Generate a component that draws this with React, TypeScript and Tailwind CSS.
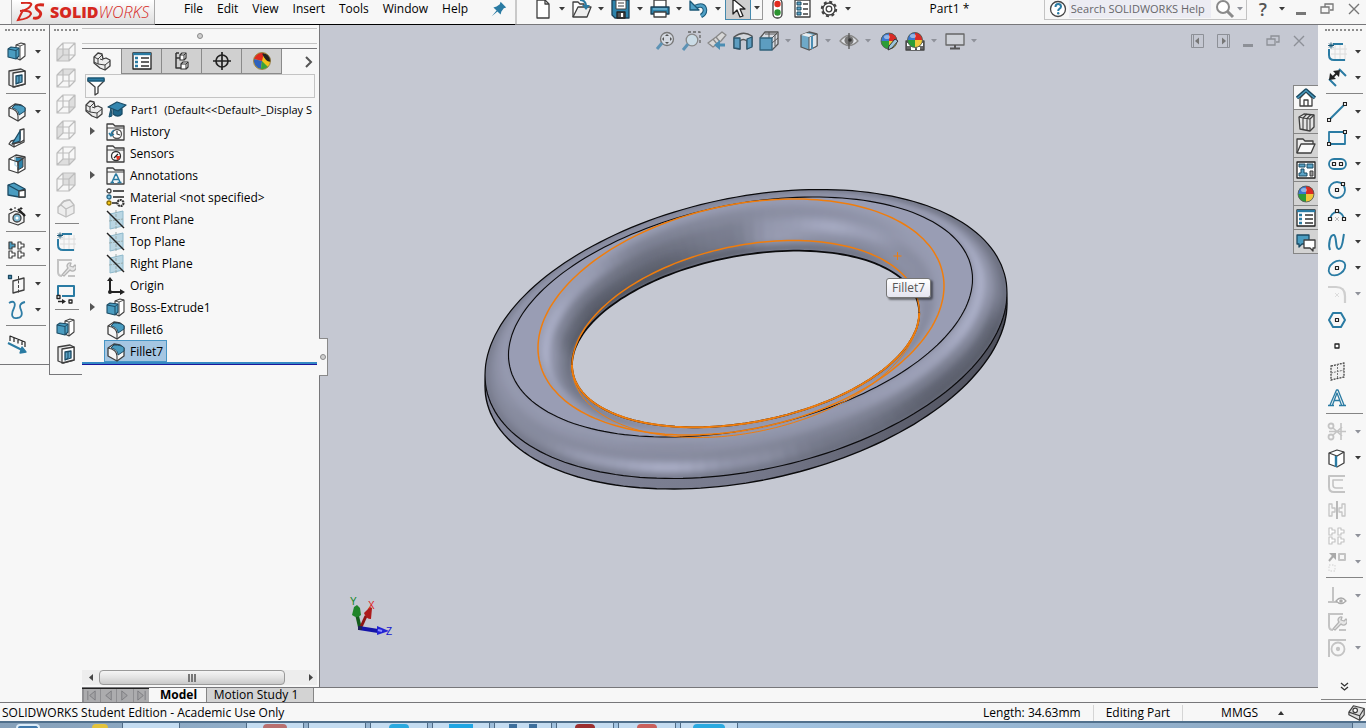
import React from 'react';

type Kids = { children?: React.ReactNode };
const INK = '#3f3f3f';
const BLUE = '#2a7ba3';
const SKY = '#5ba3c6';
const FAINT = '#c4c4c4';

const Ico = ({ children, size = 20 }: Kids & { size?: number }) => (
  <svg width={size} height={size} viewBox="0 0 20 20" fill="none" stroke={INK} strokeWidth="1.3" strokeLinejoin="round" className="shrink-0" aria-hidden="true">
    {children}
  </svg>
);

/* ---------- feature icons ---------- */
const Extrude = () => (
  <Ico>
    <path d="M9 3l5-2 4 1v12l-5 4-4-2z" fill="#fff" strokeWidth="1.100" />
    <path d="M13 4l5-2M13 4v14M13 4l-4-1" strokeWidth=".9" />
    <path d="M1 7l3-2 8 1v8l-3 3-8-2z" fill="#4a9cc0" stroke="#1c4a63" strokeWidth="1.100" />
    <path d="M1 7l8 1.500L12 6M9 8.500V17" stroke="#1c4a63" strokeWidth="1" />
  </Ico>
);
const CutExtrude = () => (
  <Ico>
    <path d="M2 3l12-2 4 2v13l-11 3-5-2z" fill="#e9e9e9" />
    <path d="M6 5l12-2v13L6 19z" fill="#fff" />
    <path d="M9 8l6-1v7l-6 2z" fill={SKY} stroke="#1c4a63" />
    <path d="M12 8v6l-3 2" stroke="#1c4a63" strokeWidth="1" />
  </Ico>
);
const FilletI = () => (
  <Ico>
    <path d="M2 6l6-4 6 1 4 3v8l-7 5-9-5z" fill="#f6f6f6" />
    <path d="M8 3c5 0 9 1 10 3v3l-6 4c0-3-2-6-7-7z" fill="#4a9cc0" stroke="#1c4a63" strokeWidth="1" />
    <path d="M2 6c5 1 9 3 9 8v5" strokeWidth="1.100" />
  </Ico>
);
const Rib = () => (
  <Ico>
    <path d="M13 2l4-1v13l-10 5-5-3 2-3 9-2z" fill="#fff" />
    <path d="M13 3v10l-8 3z" fill="#4a9cc0" stroke="#1c4a63" />
    <path d="M5 16l9-2 3-2M7 19v-3" />
  </Ico>
);
const Shell = () => (
  <Ico>
    <path d="M2 5l7-4 9 2v12l-7 4-9-3z" fill="#fff" />
    <path d="M8 3l8 1v9l-5 3V8L8 7z" fill="#2d83ab" strokeWidth="1" />
    <path d="M8 3v8l3 2" stroke="#bcdcea" strokeWidth="1.500" />
    <path d="M2 5l6 2 3 1v11M11 8l7-5" />
  </Ico>
);
const Draft = () => (
  <Ico>
    <path d="M1 5l6-2 11 6v8h-6L1 15z" fill="#4a9cc0" stroke="#1c4a63" />
    <path d="M1 5l11 6v6M12 11l6-2" stroke="#1c4a63" />
    <path d="M12 11l6-1v7h-6z" fill="#fff" />
  </Ico>
);
const Wizard = () => (
  <Ico>
    <path d="M2 8l6-3 9 3v8l-6 3-9-3z" fill="#f2f2f2" />
    <circle cx="10" cy="12" r="4" fill="#7fb9d3" />
    <circle cx="10" cy="12" r="1.500" fill="#fff" stroke="none" />
    <path d="M11 3l7 7" stroke="#222" strokeWidth="2.400" />
    <path d="M4 2v3M2.500 3.500h3M8 1v2M14 1v3M12.500 2.500h3" stroke="#222" strokeWidth="1" />
  </Ico>
);
const PatternI = ({ c = INK, a = '#4a9cc0' }: { c?: string; a?: string }) => (
  <Ico>
    {[[2, 3], [11, 3], [2, 12], [11, 12]].map(([x, y], i) => (
      <path key={i} d={`M${x} ${y - 1}h3v2h3v3h-3v2h-3z`} fill={i === 0 ? a : '#fff'} stroke={c} strokeWidth="1.200" />
    ))}
  </Ico>
);
const PlaneGeo = () => (
  <Ico>
    <path d="M6 7l11-3v12L6 19z" />
    <path d="M11.500 2v17" strokeDasharray="3 1.500" strokeWidth="1" />
    <rect x="1.500" y="1.500" width="3" height="3" fill={SKY} stroke="#1c4a63" />
  </Ico>
);
const CurveI = () => (
  <Ico><path d="M2 3c5-3 7 0 5 5-4 8-1 11 3 10 4 0 6-3 4-8-2-4-1-7 4-8" stroke="#2f7da6" strokeWidth="1.800" /></Ico>
);
const Instant = () => (
  <Ico>
    <path d="M3 7V2l15 6v5M7 8V4M11 9.500V6M15 11V7.500" stroke="#222" strokeWidth="1.200" />
    <path d="M1 9l14 7" stroke={BLUE} strokeWidth="2" />
    <path d="M13 19l6-1-4-5z" fill={BLUE} stroke={BLUE} />
  </Ico>
);
const faces = [
  'M1 7h12v12H1z',
  'M1 7l6-6h12l-6 6z',
  'M13 7l6-6v12l-6 6z',
  'M1 7l6-6v12l-6 6z',
  'M1 19l6-6h12l-6 6z',
  'M7 1h12v12H7z',
];
const GhostCube = ({ n }: { n: number }) => (
  <Ico>
    <path d={faces[n]} fill="#dedede" stroke="none" />
    <path d="M7 1h12v12H7zM1 7h12v12H1zM1 7l6-6M13 7l6-6M1 19l6-6M13 19l6-6" stroke="#bdbdbd" strokeWidth="1.200" />
  </Ico>
);
const GhostFillet = () => (
  <Ico>
    <path d="M2 9l6-6 6-1 4 5v8l-8 4-8-4z" fill="#ededed" stroke="#bdbdbd" />
    <path d="M2 9l3-2 5 4v8M5 7c1-3 3-5 9-5M10 11l8-4" stroke="#bdbdbd" />
  </Ico>
);
const SketchI = () => (
  <Ico>
    <path d="M8 3v16M13 3v16M18 3v16M4 7h16M4 12h16" stroke="#dcdcdc" strokeWidth="1" />
    <path d="M6 2h10M2 7v6q0 5 5 5h11" stroke={BLUE} strokeWidth="2" />
    <path d="M1 3.500h6M4 .5v6M2 1.500l4 4M6 1.500l-4 4" stroke="#1b5877" strokeWidth="1" />
  </Ico>
);
const RepairI = () => (
  <Ico>
    <path d="M2 1v13q0 4 4 4M2 2h14M12 18h7" stroke={FAINT} strokeWidth="2" />
    <path d="M6 17l6-7a3 3 0 013-5l-1 3 3 1 2-2a3 3 0 01-5 5l-6 6z" fill="#e6e6e6" stroke="#b4b4b4" />
  </Ico>
);
const RectMove = () => (
  <Ico>
    <path d="M2 12V2h16v10H6" stroke={BLUE} strokeWidth="2" />
    <rect x="1" y="11.500" width="3" height="3" fill="#fff" stroke="#222" />
    <path d="M2 17.500h5" stroke="#222" strokeWidth="1.500" /><path d="M6 15l4 2.500L6 20z" fill="#222" stroke="none" />
    <rect x="13" y="16" width="3" height="3" fill="#fff" stroke="#222" />
  </Ico>
);

/* ---------- sketch icons ---------- */
const Sq = ({ x, y, c = '#222' }: { x: number; y: number; c?: string }) => (
  <rect x={x - 1.5} y={y - 1.5} width="3" height="3" fill="#fff" stroke={c} strokeWidth="1.200" />
);
const Dim = () => (
  <Ico>
    <path d="M2 11l7 7M12 1l7 7" stroke={BLUE} strokeWidth="2" />
    <path d="M5 10l6-6" stroke="#222" strokeWidth="1.800" />
    <path d="M2 12l1-7 6 6zM13 2l-1 7-6-6z" fill="#222" stroke="none" />
  </Ico>
);
const LineI = () => <Ico><path d="M2 18L18 2" stroke={BLUE} strokeWidth="2" /><Sq x={2} y={18} /><Sq x={18} y={2} /></Ico>;
const RectI = () => <Ico><path d="M2 4h16v12H2z" stroke={BLUE} strokeWidth="1.800" /><Sq x={2} y={16} /><Sq x={18} y={4} /></Ico>;
const SlotI = () => <Ico><rect x="2" y="5" width="17" height="10" rx="5" stroke={BLUE} strokeWidth="1.800" /><Sq x={7} y={10} /><Sq x={14} y={10} /></Ico>;
const CircI = () => <Ico><circle cx="10" cy="10" r="8" stroke={BLUE} strokeWidth="1.800" /><Sq x={10} y={10} /><Sq x={16} y={4} /></Ico>;
const ArcI = () => <Ico><path d="M3 14a7 8 0 0114 0" stroke={BLUE} strokeWidth="1.800" /><Sq x={3} y={13} /><Sq x={17} y={13} /><Sq x={10} y={5} /><path d="M8 11l4 4M12 11l-4 4" stroke="#bbb" strokeWidth="1" /></Ico>;
const SplineI = () => <Ico><path d="M3 18c-2-5 0-16 4-15 3 1 1 15 5 14 4 0 4-12 5-15" stroke={BLUE} strokeWidth="2" /></Ico>;
const EllI = () => <Ico><ellipse cx="10" cy="10" rx="9" ry="6.500" transform="rotate(-35 10 10)" stroke={BLUE} strokeWidth="1.800" /><Sq x={10} y={10} /></Ico>;
const SkFillet = () => <Ico><path d="M1 3h8q9 0 9 9v7" stroke="#cfcfcf" strokeWidth="2.200" /><path d="M8 9l4 4M12 9l-4 4" stroke="#ddd" strokeWidth="1" /></Ico>;
const HexI = () => <Ico><path d="M6 3h8l4 7-4 7H6l-4-7z" stroke={BLUE} strokeWidth="2" /><Sq x={10} y={10} /></Ico>;
const PointI = () => <Ico><rect x="8" y="8" width="4" height="4" fill="#fff" stroke="#222" /></Ico>;
const SkPlane = () => <Ico><path d="M4 4l13-3v14L4 18z" fill="#f0f0f0" stroke="#444" strokeDasharray="2 1" /><path d="M4 11l13-3M10.500 2v15" stroke="#777" strokeDasharray="2 1" strokeWidth="1" /></Ico>;
const TextI = () => <Ico><path d="M1 17.500h6M12 17.500h7M3 17L9.500 2h1.500l6 15M5.500 17l4.500-12 4.500 12M6.500 12.500h7" stroke={BLUE} strokeWidth="1.300" /></Ico>;
const TrimI = () => (
  <Ico>
    <circle cx="4" cy="4" r="2.500" stroke={FAINT} strokeWidth="1.800" /><circle cx="4" cy="15" r="2.500" stroke={FAINT} strokeWidth="1.800" />
    <path d="M6 6l9 8M6 13l9-8M2 9.500h17M14 1v17" stroke={FAINT} strokeWidth="1.600" />
  </Ico>
);
const ConvertI = () => <Ico><path d="M2 5l8-3 7 2v11l-7 4-8-3z" fill="#fff" /><path d="M2 5l8 3 7-4" /><path d="M9 8v11" stroke={BLUE} strokeWidth="2.400" /></Ico>;
const OffsetI = () => <Ico><path d="M18 2H2v11q0 5 5 5h11" stroke={FAINT} strokeWidth="2" /><path d="M16 6H6v5q0 3 3 3h7" stroke={FAINT} strokeWidth="1.600" /></Ico>;
const MirrorI = () => <Ico><path d="M2 4h3v4h3v4H5v4H2zM18 4h-3v4h-3v4h3v4h3z" stroke={FAINT} /><path d="M10 1v18" stroke="#999" /></Ico>;
const MoveI = () => <Ico><path d="M2 9l5-6" stroke="#aaa" strokeWidth="2" /><path d="M2 1h7v7z" fill="#aaa" stroke="none" /><rect x="12" y="2" width="6" height="6" stroke={FAINT} strokeWidth="2" /><path d="M2 13h6v6H2z" stroke="#ddd" strokeDasharray="1.500 1.500" /></Ico>;
const RelationI = () => <Ico><path d="M6 1v15M1 16h9" stroke={FAINT} strokeWidth="2" /><path d="M9 15q5-6 10 0-5 5-10 0z" fill="#fff" stroke="#aaa" /><circle cx="14" cy="15" r="1.800" fill="#aaa" stroke="none" /></Ico>;
const SnapI = () => <Ico><path d="M2 19V2h17" stroke={FAINT} strokeWidth="2" /><circle cx="11" cy="11" r="6.500" stroke={FAINT} strokeWidth="1.800" /><circle cx="11" cy="11" r="1.500" fill={FAINT} stroke={FAINT} /></Ico>;

/* ---------- tree icons ---------- */
const PartI = () => (
  <Ico>
    <path d="M2 5l4-4 4 1 1 5 3-1 4 2v6l-5 4-5-2-6-5z" fill="#ededed" />
    <path d="M2 5l4 2 4-4M6 7v5l7 1 5-4M13 13v5M6 12l-4-2M8 7l3 1" strokeWidth="1" />
  </Ico>
);
const Cap = () => (
  <Ico>
    <path d="M6 9v5q5 4 9 0V9z" fill="#1f668a" stroke="#1a4d68" />
    <path d="M1 7l9-5 9 3-8 6z" fill="#3487b0" stroke="#1a4d68" />
    <path d="M4 8l-2 9 3-1z" fill="#1f668a" stroke="#1a4d68" strokeWidth="1" />
  </Ico>
);
const Folder = ({ children }: Kids) => (
  <Ico>
    <path d="M1 18V2h6l2 2h9v14z" fill="#f6f6f6" />
    <path d="M1 6h17" strokeWidth="1" />
    {children}
  </Ico>
);
const History = () => <Folder><circle cx="11" cy="12" r="4.500" fill="#fff" stroke="#555" /><path d="M11 9v3l3 1" strokeWidth="1.200" /><path d="M8 8q-3 2-3 5M3 11l2 3 3-2" stroke={BLUE} strokeWidth="1.400" /></Folder>;
const Sensors = () => <Folder><circle cx="10" cy="12" r="4.500" fill="#fff" stroke="#333" /><path d="M10 12h4a4 4 0 01-3 4z" fill="#e5301f" stroke="none" /><path d="M8 14l4-4" stroke="#222" /></Folder>;
const Annot = () => <Folder><path d="M4.500 16.500h3.500M11.500 16.500h4M6 16l3.700-8h.6L14 16M7.500 13.500h5" stroke={BLUE} strokeWidth="1.500" /></Folder>;
const Material = () => (
  <Ico>
    <circle cx="3" cy="3" r="2" fill="#fff" /><circle cx="3" cy="9" r="2" fill="#7cc0df" stroke="#27688a" /><circle cx="3" cy="15" r="2" fill="#f3c515" stroke="#8a6b00" />
    <path d="M7 3h11M7 9h11M6 15h5" stroke="#222" strokeWidth="1.600" />
    <circle cx="14.500" cy="15" r="3" stroke="#333" strokeWidth="2.200" fill="#fff" strokeDasharray="2 .6" />
  </Ico>
);
const PlaneI = () => (
  <Ico>
    <path d="M4 4l13-3v15L4 19z" fill="#b9d6e3" stroke="#8eb9cc" strokeWidth="1" />
    <path d="M10 0v19M3 11l14-2" stroke="#9aa" strokeWidth="1" strokeDasharray="3 1" />
    <path d="M1 1l17 17" stroke="#222" strokeWidth="1.400" />
  </Ico>
);
const Origin = () => <Ico><path d="M4 4v12h11" stroke="#222" strokeWidth="2" /><path d="M1 5l3-4 3 4zM14 13l5 3-5 3z" fill="#222" stroke="none" /><circle cx="4" cy="16" r="2" fill="#222" stroke="none" /></Ico>;
const Ball = ({ k = 8 }: { k?: number }) => (
  <>
    <circle cx="10" cy="10" r={k} fill="#2c9c37" stroke="none" />
    <path d={`M10 10V${10 - k}A${k} ${k} 0 01${10 + k} 10z`} fill="#da2b26" stroke="none" />
    <path d={`M10 10H${10 + k}A${k} ${k} 0 0110 ${10 + k}z`} fill="#f0c73a" stroke="none" />
    <path d={`M${10 - k} 10A${k} ${k} 0 0110 ${10 - k}V10z`} fill="#3b78d0" stroke="none" />
    <circle cx="10" cy="10" r={k} stroke="#555" strokeWidth=".8" />
    <ellipse cx="8" cy="6" rx="3" ry="2" fill="#fff" opacity=".45" stroke="none" />
  </>
);
const BallI = () => <Ico><Ball /></Ico>;
const AppearTab = () => (
  <Ico>
    <circle cx="10" cy="10" r="8.500" fill="#f2c21a" stroke="none" />
    <path d="M10 10L2 8A8.500 8.500 0 0112 2z" fill="#df2b20" stroke="none" />
    <path d="M10 10l-8-2a8.500 8.500 0 007 10z" fill="#2f62bd" stroke="none" />
    <path d="M10 10l-1 8a8.500 8.500 0 007-2z" fill="#3aa33c" stroke="none" />
    <path d="M11 3q6 0 7 7-4 0-7-7z" fill="#222" stroke="#222" />
    <circle cx="10" cy="10" r="8.500" stroke="#8a7340" strokeWidth=".8" />
  </Ico>
);
const PropI = () => (
  <Ico>
    <path d="M1 2h18v16H1z" fill="#fff" stroke="#222" /><path d="M1 3h18" stroke={BLUE} strokeWidth="2.400" />
    <path d="M3 7h3M3 11h3M3 15h3" stroke={BLUE} strokeWidth="2.400" /><path d="M9 7h8M9 11h8M9 15h8" stroke="#333" />
  </Ico>
);
const ConfigI = () => <Ico><path d="M4 2h3M4 2v15h5M4 7h4" stroke="#333" strokeWidth="1.500" /><path d="M8 4l2-2h4v5l-2 2H8zM9 13l2-2h5v5l-2 2H9z" fill="#fff" stroke="#333" strokeWidth="1.200" /><path d="M8 4h4v5M12 4l2-2M9 13h5v5M14 13l2-2" stroke="#333" strokeWidth="1" /></Ico>;
const Cross = () => <Ico><circle cx="10" cy="10" r="6" stroke="#222" strokeWidth="1.700" /><path d="M10 1v18M1 10h18" stroke="#222" strokeWidth="1.700" /></Ico>;
const FilterI = () => <Ico><path d="M2 3h16v2l-6 6v6l-3 2v-8L2 5z" fill="#fff" /><path d="M2 2h16v3H2z" fill={BLUE} stroke="#1b5877" /></Ico>;

/* ---------- top bar icons ---------- */
const NewI = () => <Ico><path d="M4 1h8l4 4v14H4z" fill="#fff" /><path d="M12 1v4h4" /></Ico>;
const OpenI = () => <Ico><path d="M1 18V3h5l2 2h4v3" fill="#fff" /><path d="M1 18L6 8h13l-4 10z" fill="#eee" /><path d="M8 1q5 0 6 5" stroke={BLUE} strokeWidth="2.200" /><path d="M10 6h8l-4 5z" fill={BLUE} stroke="none" /></Ico>;
const SaveI = () => <Ico><path d="M1 1h17v18H4l-3-3z" fill="#2d83ab" stroke="#1b3f55" /><path d="M5 1h10v9H5z" fill="#fff" stroke="#444" strokeWidth="1" /><path d="M7 4h6M7 7h6" strokeWidth="1" /><path d="M6 13h8v6H6z" fill="#555" stroke="#222" /><path d="M11 14v4" stroke="#fff" strokeWidth="2" /></Ico>;
const PrintI = () => <Ico><path d="M4 8V1h12v7" fill="#fff" /><path d="M1 8h18v7H1z" fill="#2d83ab" stroke="#1b3f55" /><path d="M4 13h12v5H4z" fill="#fff" /><path d="M3 10h14" stroke="#9fd0e6" strokeWidth="1" /></Ico>;
const UndoI = () => <Ico><path d="M6 8q9-4 10 3 0 4-4 6" stroke="#1b5877" strokeWidth="4.500" /><path d="M6 8q9-4 10 3 0 4-4 6" stroke="#4fa0c6" strokeWidth="2.500" /><path d="M1 2v9h9z" fill="#4fa0c6" stroke="#1b5877" /></Ico>;
const PickI = () => <Ico><path d="M5 1v15l4-4 3 7 3-1-3-7h5z" fill="#fff" stroke="#222" /></Ico>;
const LightI = () => <Ico><rect x="6" y="0" width="9" height="19" rx="4" fill="#fff" /><circle cx="10.500" cy="5" r="3.200" fill="#e22b1e" stroke="none" /><circle cx="10.500" cy="13.500" r="3.200" fill="#2c9430" stroke="none" /></Ico>;
const OptI = () => <Ico><path d="M2 1h15v17H2z" fill="#fff" /><path d="M4 3h4v3H4zM4 8h4v3H4zM4 13h4v3H4z" fill={SKY} stroke="#1b4a63" strokeWidth="1" /><path d="M10 5h5M10 10h5M10 15h5" /></Ico>;
const GearI = () => <Ico><circle cx="10" cy="10" r="7.200" strokeWidth="2" strokeDasharray="3 2.655" /><circle cx="10" cy="10" r="6" fill="#fff" /><circle cx="10" cy="10" r="2.800" /></Ico>;
const PinI = () => <Ico size={16}><path d="M12 1l7 7-3 1-3 4-1 4-4-4-7 6 6-7-4-4 4-1 4-3z" fill={BLUE} stroke="none" /></Ico>;
const GlassI = () => <Ico><circle cx="8" cy="8" r="6" fill="#fff" stroke="#8a8a8a" strokeWidth="2" /><path d="M12 12l6 6" stroke="#8a8a8a" strokeWidth="3" /></Ico>;
const HelpI = () => <svg width="18" height="18" viewBox="0 0 18 18" className="shrink-0" aria-hidden="true"><circle cx="9" cy="9" r="7.500" fill="#fff" stroke="#444" strokeWidth="1.300" /><path d="M6.500 7q0-3 2.700-3T12 6.500q0 1.500-1.600 2.300Q9.200 9.500 9.200 11" fill="none" stroke={BLUE} strokeWidth="2" /><circle cx="9.200" cy="13.300" r="1.200" fill={BLUE} /></svg>;

/* ---------- view icons ---------- */
const ZoomFit = () => <Ico><circle cx="12" cy="8" r="6.500" fill="#d3d8e0" stroke="#777" /><path d="M7 12l-5 6" stroke="#5d93b5" strokeWidth="3" /><path d="M12 3l2 2h-4zM12 13l2-2h-4zM7 8l2-2v4zM17 8l-2-2v4z" fill="#555" stroke="none" /></Ico>;
const ZoomArea = () => <Ico><path d="M7 1h12v13" stroke="#666" strokeDasharray="3 2" /><circle cx="11" cy="9" r="5.800" fill="#cbdce6" stroke="#888" /><path d="M7 13l-5 6" stroke="#5d93b5" strokeWidth="3" /></Ico>;
const PrevView = () => <Ico><path d="M1 12l8-6 6-5 4 3-5 6-8 6z" fill="#d8d8d8" stroke="#888" /><path d="M9 6l4 5M6 8l4 5" stroke="#888" /><path d="M18 14h-6" stroke="#4a8db3" strokeWidth="3" /><path d="M13 9v10l-6-5z" fill="#4a8db3" stroke="none" /></Ico>;
const SectionI = () => <Ico><path d="M1 6q9-7 18-1v10l-5 3V10q-4-3-7 0v8l-6-1z" fill="#d4d7dc" stroke="#555" /><path d="M1 7h6v11l-6-1zM14 8l5-2v10l-5 2z" fill="#5d9dc0" stroke="#2b566e" /></Ico>;
const OrientI = () => <Ico><path d="M1 7l5-6h13v12l-6 6" fill="#d9dce2" stroke="#555" /><path d="M13 7l6-6M10 1v6M16 4v11M6 3h12M13 12l6-5" stroke="#555" strokeWidth="1" /><path d="M1 7h12v12H1z" fill="#5d9dc0" stroke="#31617b" /></Ico>;
const DisplayI = () => <Ico><path d="M2 4l8-3 8 2v12l-8 4-8-3z" fill="#6fa9c8" stroke="#555" /><path d="M10 6l8-3v12l-8 4z" fill="#dfe5ea" stroke="#555" strokeWidth="1" /><path d="M2 4l8 2 4-2-7-2z" fill="#e9edf0" stroke="none" /><path d="M13 5v13" stroke="#4a8db3" strokeWidth="2" /></Ico>;
const EyeI = () => <Ico><path d="M1 10q9-11 18 0-9 9-18 0z" fill="#dfe1e6" stroke="#888" /><circle cx="10" cy="9.500" r="4.500" fill="#777" stroke="none" /><path d="M10 2v16" stroke="#555" /><circle cx="11" cy="9" r="1.800" fill="#333" stroke="none" /></Ico>;
const EditApp = () => <Ico><Ball k={8} /><path d="M9 19l1-4 6-7 3 2-6 7z" fill="#9cc4dc" stroke="#333" strokeWidth="1" /></Ico>;
const SceneI = () => <Ico><path d="M1 10h18v9H1z" fill="#666" stroke="#444" /><path d="M2 12h4v3H2zM14 12h4v3h-4zM6 16h4v3H6zM12 16h3v3h-3z" fill="#fff" stroke="none" /><g transform="translate(0 -1)"><Ball k={7.500} /></g></Ico>;
const MonitorI = () => <Ico><path d="M1 3h18v11H1z" fill="#cfd2d8" stroke="#666" /><path d="M10 14v3M5 17.500h10" stroke="#555" strokeWidth="2" /></Ico>;

/* ---------- task pane icons ---------- */
const HomeI = () => <Ico><path d="M4 10v8h12v-8l-6-6z" fill="#fff" /><path d="M8 18v-6h4v6" /><path d="M1 10l9-8 9 8" stroke="#1b4a63" strokeWidth="3.400" /><path d="M1.500 10L10 2.500l8.500 7.500" stroke="#4a9cc0" strokeWidth="1.200" /></Ico>;
const BooksI = () => <Ico><path d="M3 5l5-3 10 1v12l-4 4L4 17z" fill="#e4e4e4" /><path d="M3 5l4 1v11.500M7 6l4-4M11 6.500l4-4M11 6.500v12M14 7l4-4M14 7v12M7 6l7 1" strokeWidth="1.100" /></Ico>;
const FoldI = () => <Ico><path d="M1 17V3h6l2 2h8v3" fill="#eee" /><path d="M1 17L5 8h14l-4 9z" fill="#fafafa" /></Ico>;
const PaletteI = () => <Ico><path d="M1 2h18v16H1z" fill="#fff" stroke="#222" /><path d="M3 4h6v3H3zM11 4h6v4h-6zM5 9h3v4h3v3H3v-3h2z" fill="#5ba3c6" stroke="#1b4a63" strokeWidth="1" /><path d="M14 11h3v5h-3z" fill="#999" strokeWidth="1" /></Ico>;
const ForumI = () => <Ico><path d="M1 3h12v9H6l-3 3v-3H1z" fill="#4a9cc0" stroke="#1b4a63" /><path d="M8 8h11v8h-2v3l-3-3H8z" fill="#fff" /></Ico>;

const Caret = ({ faint = false, btn = false }: { faint?: boolean; btn?: boolean }) => (
  <svg width="6" height="4" viewBox="0 0 6 4" className={btn ? 'mx-auto shrink-0' : 'shrink-0'} aria-hidden="true"><path d="M0 0h6L3 3.500z" fill={faint ? '#8f929a' : '#3a3a3a'} /></svg>
);
const Grip = () => <div className="mx-1 mt-1 h-0 border-t-2 border-dotted border-[#8d8d8d]" />;

type Tool = { n: string; i: React.ReactNode; c?: boolean; f?: boolean } | null;

const Strip = ({ items, wide }: { items: Tool[]; wide: boolean }) => (
  <div className="mt-2 flex flex-col">
    {items.map((t, k) =>
      t === null ? (
        <div key={k} className="h-2 pt-[2px]"><div className="ml-[5px] mr-[3px] border-t border-[#858585]" /></div>
      ) : (
        <button key={k} aria-label={t.n} className={wide ? 'flex h-[26px] items-center gap-2 pl-[6px]' : 'flex h-[26px] items-center pl-[6px]'}>
          {t.i}
          {t.c && <Caret faint={t.f} />}
        </button>
      ),
    )}
  </div>
);

const leftTools: Tool[] = [
  { n: 'Extruded Boss', i: <Extrude />, c: true }, { n: 'Extruded Cut', i: <CutExtrude />, c: true }, null,
  { n: 'Fillet', i: <FilletI />, c: true }, { n: 'Rib', i: <Rib /> }, { n: 'Shell', i: <Shell /> }, { n: 'Draft', i: <Draft /> },
  { n: 'Hole Wizard', i: <Wizard />, c: true }, null, { n: 'Linear Pattern', i: <PatternI />, c: true }, null,
  { n: 'Reference Geometry', i: <PlaneGeo />, c: true }, { n: 'Curves', i: <CurveI />, c: true }, null, { n: 'Instant3D', i: <Instant /> },
];
const viewTools: Tool[] = [
  { n: 'Front', i: <GhostCube n={0} /> }, { n: 'Top', i: <GhostCube n={1} /> }, { n: 'Right', i: <GhostCube n={2} /> },
  { n: 'Left', i: <GhostCube n={3} /> }, { n: 'Bottom', i: <GhostCube n={4} /> }, { n: 'Back', i: <GhostCube n={5} /> },
  { n: 'Isometric', i: <GhostFillet /> }, null, { n: 'Sketch', i: <SketchI /> }, { n: 'Repair Sketch', i: <RepairI /> },
  { n: 'Move Sketch', i: <RectMove /> }, null, { n: 'Boss', i: <Extrude /> }, { n: 'Cut', i: <CutExtrude /> },
];
const sketchTools: Tool[] = [
  { n: 'Sketch', i: <SketchI />, c: true }, { n: 'Smart Dimension', i: <Dim />, c: true }, null,
  { n: 'Line', i: <LineI />, c: true }, { n: 'Rectangle', i: <RectI />, c: true }, { n: 'Slot', i: <SlotI />, c: true },
  { n: 'Circle', i: <CircI />, c: true }, { n: 'Arc', i: <ArcI />, c: true }, { n: 'Spline', i: <SplineI />, c: true },
  { n: 'Ellipse', i: <EllI />, c: true }, { n: 'Sketch Fillet', i: <SkFillet />, c: true, f: true }, { n: 'Polygon', i: <HexI /> },
  { n: 'Point', i: <PointI /> }, { n: 'Plane', i: <SkPlane /> }, { n: 'Text', i: <TextI /> }, null,
  { n: 'Trim', i: <TrimI />, c: true, f: true }, { n: 'Convert Entities', i: <ConvertI />, c: true }, { n: 'Offset', i: <OffsetI /> },
  { n: 'Mirror', i: <MirrorI /> }, { n: 'Pattern', i: <PatternI c={FAINT} a="#fff" />, c: true, f: true },
  { n: 'Move', i: <MoveI />, c: true, f: true }, null, { n: 'Relations', i: <RelationI />, c: true, f: true },
  { n: 'Repair', i: <RepairI /> }, { n: 'Quick Snaps', i: <SnapI />, c: true, f: true },
];

/* ---------- ring model ---------- */
type Ell = { cx: number; cy: number; w: number; h: number; k: number };
const rim: Ell = { cx: 426, cy: 309, w: 261, h: 144.5, k: 41 };
const base: Ell = { ...rim, cy: 319.5 };
const flat: Ell = { cx: 420.5, cy: 292, w: 232, h: 120, k: 38 };
const lipOut: Ell = { cx: 421, cy: 292, w: 203, h: 118, k: 31 };
const lipIn: Ell = { cx: 425.6, cy: 314, w: 173.6, h: 98.5, k: 27 };
const hole: Ell = { cx: 425.6, cy: 314, w: 173.6, h: 88.3, k: 26 };

const at = (e: Ell, deg: number): [number, number] => {
  const a = (deg * Math.PI) / 180;
  return [e.cx + e.w * Math.cos(a), e.cy - e.k * Math.cos(a) - Math.sqrt(e.h * e.h - e.k * e.k) * Math.sin(a)];
};
const trace = (e: Ell, from = 0, to = 360) => {
  let d = '';
  for (let t = from; t <= to; t += 2) {
    const [x, y] = at(e, t);
    d += `${d ? 'L' : 'M'}${x.toFixed(1)} ${y.toFixed(1)}`;
  }
  return d;
};
// Brightness samples across each band (edge to edge) at a given angle.
type Row = [number, number[]];
const outerShade: Row[] = [
  [0, [157, 176, 150, 128, 106]], [35, [157, 163, 148, 128, 110]], [70, [157, 155, 145, 132, 120]],
  [110, [152, 150, 146, 138, 130]], [150, [155, 152, 148, 138, 125]], [185, [157, 153, 146, 136, 122]],
  [215, [157, 151, 140, 138, 120]], [235, [157, 148, 140, 158, 122]], [252, [156, 144, 140, 174, 124]],
  [270, [157, 148, 136, 146, 120]], [290, [157, 150, 130, 120, 110]], [320, [157, 162, 126, 100, 94]],
  [342, [157, 175, 138, 104, 90]], [360, [157, 176, 150, 128, 106]],
];
const innerShade: Row[] = [
  [0, [157, 154, 143, 140, 148]], [30, [157, 154, 142, 144, 136]], [50, [157, 148, 160, 140, 114]],
  [62, [157, 145, 170, 144, 110]], [80, [157, 142, 154, 156, 108]], [95, [157, 136, 126, 122, 98]],
  [120, [157, 130, 112, 98, 84]], [145, [157, 158, 120, 96, 82]], [165, [157, 172, 132, 106, 88]],
  [180, [157, 176, 146, 126, 106]], [200, [157, 160, 136, 122, 120]], [225, [157, 148, 138, 134, 142]],
  [250, [157, 155, 152, 150, 150]], [300, [157, 156, 154, 152, 150]], [330, [157, 152, 142, 134, 140]],
  [360, [157, 154, 143, 140, 148]],
];
const pick = (rows: Row[], deg: number, s: number) => {
  const j = Math.max(1, rows.findIndex((r) => r[0] >= deg));
  const [a0, r0] = rows[j - 1];
  const [a1, r1] = rows[j];
  const raw = (deg - a0) / (a1 - a0);
  const u = raw * raw * (3 - 2 * raw);
  const p = s * 4;
  const i = Math.min(3, Math.floor(p));
  const g = p - i;
  const f = g * g * (3 - 2 * g);
  const v0 = r0[i] * (1 - f) + r0[i + 1] * f;
  const v1 = r1[i] * (1 - f) + r1[i + 1] * f;
  return v0 * (1 - u) + v1 * u;
};
const Band = ({ a, b, rows }: { a: Ell; b: Ell; rows: Row[] }) => {
  const out: React.ReactNode[] = [];
  const n = 16;
  const step = 3;
  const mix = (deg: number, s: number) => {
    const [x0, y0] = at(a, deg);
    const [x1, y1] = at(b, deg);
    return `${(x0 + (x1 - x0) * s).toFixed(1)},${(y0 + (y1 - y0) * s).toFixed(1)}`;
  };
  for (let t = 0; t < 360; t += step)
    for (let i = 0; i < n; i++) {
      const v = pick(rows, t + step / 2, (i + 0.5) / n);
      const c = `rgb(${Math.round(v - 4)},${Math.round(v)},${Math.round(v * 1.14)})`;
      out.push(<polygon key={`${t}-${i}`} points={`${mix(t, i / n)} ${mix(t + step, i / n)} ${mix(t + step, (i + 1) / n)} ${mix(t, (i + 1) / n)}`} fill={c} stroke={c} strokeWidth=".8" />);
    }
  return <g filter="url(#smooth)">{out}</g>;
};
const Ring = () => (
  <svg width="998" height="662" viewBox="0 0 998 662" fill="none" className="absolute left-0 top-0" role="img" aria-label="Ring part">
    <defs>
      <linearGradient id="under" x1="0" x2="1"><stop offset="0" stopColor="#83869a" /><stop offset=".5" stopColor="#777a8c" /><stop offset="1" stopColor="#4d4f5b" /></linearGradient>
      <filter id="smooth"><feGaussianBlur stdDeviation="2" /></filter>
      <clipPath id="rimClip"><path d={trace(rim)} /></clipPath>
      <clipPath id="lipClip"><path d={trace(lipOut)} /></clipPath>
    </defs>
    <path d={trace(base)} fill="url(#under)" stroke="#0b0b0d" strokeWidth="1.400" />
    <path d={trace(rim)} fill="#7c7f92" />
    <g clipPath="url(#rimClip)"><Band a={flat} b={rim} rows={outerShade} /></g>
    <path d={trace(rim)} stroke="#0b0b0d" strokeWidth="1.200" />
    <path d={trace(flat)} fill="#999db4" stroke="#0b0b0d" strokeWidth="1.100" />
    <g clipPath="url(#lipClip)"><Band a={lipOut} b={hole} rows={innerShade} /></g>
    <path d={trace(hole)} fill="#c5c8d2" stroke="#0b0b0d" strokeWidth="1.800" />
    <g stroke="#f07d0c" strokeWidth="1.500">
      <path d={trace(lipOut)} />
      <path d={trace(lipIn, 0, 180)} />
      <path d={trace(lipIn, 180, 360)} strokeWidth="1" />
      <path d={trace(hole, 180, 360)} strokeWidth="2" />
      <path d="M577.500 227v8M573.500 231h8" strokeWidth="1" />
    </g>
    <g>
      <path d="M40 603l-3-13" stroke="#145c1c" strokeWidth="3.500" /><path d="M32 590l2-8 3-2 3 3 1 7q-4 4-9 0z" fill="#1f8429" />
      <path d="M41 602l5-11" stroke="#8d1414" strokeWidth="3" /><path d="M44 588l6-6 2 1-1 11q-5 0-7-6z" fill="#ad1b1b" />
      <path d="M39 603l19 3" stroke="#1414a8" strokeWidth="4" /><path d="M57 601l12 5-12 4z" fill="#2424d4" />
      <path d="M58 605l4 1" stroke="#8d8dff" strokeWidth="2" />
      <rect x="38" y="601" width="4" height="4" fill="#20205a" />
    </g>
    <g fontFamily="Liberation Sans, sans-serif" fontSize="10">
      <text x="30" y="580" fill="#12861f">Y</text>
      <text x="48" y="584" fill="#e01b1b">X</text>
      <text x="66" y="610" fill="#1515d0">Z</text>
    </g>
  </svg>
);

/* ---------- panels ---------- */
const menus = ['File', 'Edit', 'View', 'Insert', 'Tools', 'Window', 'Help'];
const fileTools: [string, React.ReactNode][] = [['New', <NewI />], ['Open', <OpenI />], ['Save', <SaveI />], ['Print', <PrintI />], ['Undo', <UndoI />]];

const Restore = ({ c }: { c: string }) => <svg width="14" height="12" viewBox="0 0 14 12" fill="none" stroke={c} strokeWidth="1.300" aria-hidden="true"><path d="M5 4V1h8v6h-3M1 4h8v6H1z" /></svg>;
const Close = ({ c }: { c: string }) => <svg width="12" height="12" viewBox="0 0 12 12" fill="none" stroke={c} strokeWidth="1.400" aria-hidden="true"><path d="M1 1l10 10M11 1L1 11" /></svg>;

const Header = () => (
  <header className="flex h-[25px] shrink-0 items-start border-b border-[#77777a]">
    <div className="flex h-[25px] w-[515px] shrink-0 items-start pl-[11px]">
      <div className="flex h-6 w-36 shrink-0 items-center border-l border-r border-[#a9a9a9] bg-gradient-to-b from-white to-[#dedede] pl-1">
        <svg width="30" height="20" viewBox="0 0 30 20" fill="none" stroke="#d6281f" aria-hidden="true">
          <path d="M5 1q12-1 10 2-2 4-9 6" strokeWidth="2" />
          <path d="M7 8L2 18q11-1 13-6 0-4-11-3" strokeWidth="2" />
          <path d="M28 3q-8-1-8 2 0 2 3 4t1 5q-2 3-7 2" strokeWidth="2.800" />
        </svg>
        <span className="ml-1 whitespace-nowrap text-[16px] leading-5 text-[#d6281f]"><b className="font-extrabold">SOLID</b><span className="font-light italic">WORKS</span></span>
      </div>
      <nav className="flex h-[25px] flex-1 items-start border-b border-black pl-[29px]">
        <div className="flex h-[18px] items-center gap-[14px]">{menus.map((m) => <button key={m}>{m}</button>)}</div>
        <button aria-label="Pin" className="ml-auto mr-2 flex h-[18px] items-center"><PinI /></button>
      </nav>
    </div>
    <div className="flex h-6 flex-1 items-start border-l-2 border-[#c9c9c9] pl-4">
      <div className="flex h-[18px] items-center">
        {fileTools.map(([n, i]) => (
          <button key={n} aria-label={n} className="flex w-[39px] shrink-0 items-center gap-[6px]">{i}<Caret /></button>
        ))}
        <button aria-label="Select" className="-ml-[3px] -mt-[2px] flex h-6 w-[26px] items-center justify-center border border-[#4689ad] bg-[#cfcfcf]"><PickI /></button>
        <button aria-label="Select options" className="-mt-[2px] flex h-6 w-3 items-center border border-l-0 border-[#999]"><Caret btn /></button>
        <div className="ml-1 flex items-center gap-[6px]"><LightI /><OptI /><GearI /><Caret /></div>
      </div>
      <div className="flex h-[18px] flex-1 items-center justify-center pl-1">Part1 *</div>
      <label className="flex h-5 shrink-0 items-center border border-t-0 border-[#c3c3c3] pb-[2px] pl-1 pr-[3px]">
        <HelpI />
        <input aria-label="Search SOLIDWORKS Help" placeholder="Search SOLIDWORKS Help" className="ml-[2px] h-[18px] w-[142px] shrink-0 bg-[#ececf3] px-[2px] text-[11px] outline-none placeholder:text-[#66666a]" />
        <span className="ml-1"><GlassI /></span>
        <span className="ml-[2px]"><Caret faint /></span>
      </label>
      <div className="flex h-[18px] shrink-0 items-center pl-3 pr-[6px] text-[#555]">
        <button className="text-[18px] font-semibold leading-[18px]" aria-label="Help">?</button>
        <span className="ml-3"><Caret /></span>
        <button aria-label="Minimize" className="ml-[11px] mt-2 h-[3px] w-[10px] bg-[#777]" />
        <button aria-label="Restore" className="ml-[14px]"><Restore c="#777" /></button>
        <button aria-label="Close" className="ml-[14px]"><Close c="#777" /></button>
      </div>
    </div>
  </header>
);

type Node = { t: string; i: React.ReactNode; a?: boolean; s?: boolean };
const nodes: Node[] = [
  { t: 'History', i: <History />, a: true }, { t: 'Sensors', i: <Sensors /> }, { t: 'Annotations', i: <Annot />, a: true },
  { t: 'Material <not specified>', i: <Material /> }, { t: 'Front Plane', i: <PlaneI /> }, { t: 'Top Plane', i: <PlaneI /> },
  { t: 'Right Plane', i: <PlaneI /> }, { t: 'Origin', i: <Origin /> }, { t: 'Boss-Extrude1', i: <Extrude />, a: true },
  { t: 'Fillet6', i: <FilletI /> }, { t: 'Fillet7', i: <FilletI />, s: true },
];
const tabs: [string, React.ReactNode][] = [['Property Manager', <PropI />], ['Configuration Manager', <ConfigI />], ['DimXpert Manager', <Cross />], ['Display Manager', <AppearTab />]];

const TreePanel = () => (
  <section className="flex w-[238px] shrink-0 flex-col border-r border-[#77777a] pr-[2px]">
    <div className="mt-[3px] flex h-4 items-center justify-center border-y border-[#c4c4c4]"><span className="h-[6px] w-[6px] rounded-full border border-[#8a8a8a] bg-[#cfcfcf]" /></div>
    <div className="mt-1 flex h-[26px] shrink-0 border-t border-[#77777a]">
      <button aria-label="FeatureManager" className="flex w-[39px] items-center justify-center"><PartI /></button>
      {tabs.map(([n, i]) => (
        <button key={n} aria-label={n} className="flex w-10 items-center justify-center border-b border-l border-[#8a8a8a] bg-[#d0d0d0]">{i}</button>
      ))}
      <div className="border-l border-[#8a8a8a]" />
      <button aria-label="More tabs" className="ml-auto mr-1"><svg width="8" height="12" viewBox="0 0 8 12" fill="none" stroke="#555" strokeWidth="2" aria-hidden="true"><path d="M1 1l5 5-5 5" /></svg></button>
    </div>
    <label className="ml-[3px] mr-[2px] flex h-6 shrink-0 items-center border border-[#c4c4c4]">
      <FilterI /><input aria-label="Filter" className="min-w-0 flex-1 bg-transparent outline-none" />
    </label>
    <ul>
      <li className="flex h-[22px] items-center whitespace-pre pl-[2px] pt-[2px]"><PartI /><span className="ml-[3px]"><Cap /></span><span className="ml-1 text-[11px]">Part1  (Default&lt;&lt;Default&gt;_Display S</span></li>
      {nodes.map((n) => (
        <li key={n.t} className="flex h-[22px] items-center pl-2">
          <span className="w-[14px] shrink-0">{n.a && <svg width="6" height="8" viewBox="0 0 6 8" aria-hidden="true"><path d="M0 0l5 4-5 4z" fill="#555" /></svg>}</span>
          <button className={n.s ? 'flex h-[22px] items-center gap-1 whitespace-nowrap border border-[#4795c5] bg-[#a5c6e2] pl-px pr-[3px] pt-[2px]' : 'flex h-[22px] items-center gap-1 whitespace-nowrap pl-[2px] pt-[2px]'}>{n.i}{n.t}</button>
        </li>
      ))}
    </ul>
    <div className="h-[3px] shrink-0 border-t-2 border-[#3489c4] bg-[#1c169c]" />
    <div className="mb-[2px] mt-auto flex h-[15px] shrink-0 items-center bg-[#ededed]">
      <button aria-label="Scroll left" className="flex w-[17px] justify-center"><svg width="4" height="7" viewBox="0 0 4 7" aria-hidden="true"><path d="M4 0v7L0 3.500z" fill="#444" /></svg></button>
      <button aria-label="Scroll" className="flex h-[15px] w-[186px] items-center justify-center gap-px rounded-sm border border-[#999] bg-gradient-to-b from-[#f5f5f5] via-[#e3e3e3] to-[#c9c9c9]">
        <span className="h-2 w-[2px] bg-[#777]" /><span className="h-2 w-[2px] bg-[#777]" /><span className="h-2 w-[2px] bg-[#777]" />
      </button>
      <button aria-label="Scroll right" className="ml-auto mr-1"><svg width="4" height="7" viewBox="0 0 4 7" aria-hidden="true"><path d="M0 0v7l4-3.500z" fill="#444" /></svg></button>
    </div>
  </section>
);

const viewBar: [string, React.ReactNode, boolean][] = [
  ['Zoom to Fit', <ZoomFit />, false], ['Zoom to Area', <ZoomArea />, false], ['Previous View', <PrevView />, false], ['Section View', <SectionI />, false],
  ['View Orientation', <OrientI />, true], ['Display Style', <DisplayI />, true], ['Hide/Show', <EyeI />, true], ['Edit Appearance', <EditApp />, false],
  ['Apply Scene', <SceneI />, true], ['View Settings', <MonitorI />, true],
];
const paneTabs: [string, React.ReactNode][] = [['Resources', <HomeI />], ['Design Library', <BooksI />], ['File Explorer', <FoldI />], ['View Palette', <PaletteI />], ['Appearances', <BallI />], ['Properties', <PropI />], ['Forum', <ForumI />]];

const Viewport = () => (
  <main className="relative min-w-0 flex-1 bg-[#c5c8d2]">
    <Ring />
    <div className="relative grid grid-cols-[1fr_auto_1fr] pt-[6px]">
      <span />
      <div className="flex h-5 items-center gap-[6px] pr-1">
        {viewBar.map(([n, i, c]) => (
          <button key={n} aria-label={n} className={c ? 'flex w-[34px] items-center gap-[6px]' : 'flex items-center'}>{i}{c && <Caret faint />}</button>
        ))}
      </div>
      <div className="flex h-5 items-center justify-end gap-[13px] pr-[13px]">
        {[true, false].map((l) => (
          <button key={String(l)} aria-label={l ? 'Dock left' : 'Dock right'}><svg width="13" height="14" viewBox="0 0 13 14" fill="none" stroke="#8d9097" aria-hidden="true"><path d="M.5.5h12v13H.5z" /><path d={l ? 'M2.500 0v14' : 'M10.500 0v14'} /><path d={l ? 'M8 3.500v7L4 7z' : 'M5 3.500v7L9 7z'} fill="#777" stroke="none" /></svg></button>
        ))}
        <button aria-label="Minimize document" className="mt-2 h-[3px] w-[10px] bg-[#8d9097]" />
        <button aria-label="Restore document"><Restore c="#8d9097" /></button>
        <button aria-label="Close document"><Close c="#8d9097" /></button>
      </div>
    </div>
    <button aria-label="Collapse panel" className="absolute -left-px top-[313px] flex h-[38px] w-[9px] items-center justify-center border border-l-0 border-[#8a8a8a] bg-[#f7f7f7]"><span className="h-[6px] w-[6px] rounded-full border border-[#8a8a8a] bg-[#cfcfcf]" /></button>
    <div role="tooltip" className="absolute left-[566px] top-[253px] flex h-5 items-center rounded-[3px] border border-[#767676] bg-gradient-to-b from-white to-[#e5e5f0] px-[5px] text-[#575757] shadow-[2px_2px_2px_rgba(0,0,0,0.45)]">Fillet7</div>
    <div className="absolute right-0 top-[60px] flex w-[25px] flex-col border-b border-l border-[#858585]">
      {paneTabs.map(([n, i], k) => (
        <button key={n} aria-label={n} className={k === 0 ? 'flex h-6 items-center justify-center border-t border-[#858585] bg-[#f7f7f7]' : 'flex h-6 items-center justify-center border-t border-[#858585] bg-[#d3d3d3]'}>{i}</button>
      ))}
    </div>
  </main>
);

const navPaths = ['M2 1v10M10 1v10L4 6z', 'M9 1v10L3 6z', 'M3 1v10l6-5z', 'M10 1v10M2 1v10l6-5z'];
const ModelTabs = () => (
  <div className="flex h-[15px] shrink-0 items-stretch border-t border-[#77777a]">
    <div className="flex w-[67px] gap-px border-t border-[#222] bg-[#8f8f92] pl-[2px]">
      {navPaths.map((d, k) => <button key={k} aria-label={`Tab ${k + 1}`} className="flex flex-1 items-center justify-center bg-[#acacae]"><svg width="11" height="11" viewBox="0 0 12 12" fill="#a2a2a4" stroke="#7c7c80" aria-hidden="true"><path d={d} /></svg></button>)}
    </div>
    <button className="w-[57px] pl-[2px] font-bold leading-[12px]">Model</button>
    <button className="w-[108px] border-x border-[#858585] bg-[#d3d3d3] pr-2 leading-[12px]">Motion Study 1</button>
  </div>
);

const apps: [string, string][] = [
  ['ml-[66px]', 'w-6 rounded-t-full bg-[#b86f6f]'], ['ml-1', 'hidden'], ['ml-1', 'w-5 rounded-t-full bg-[#2aa9e0]'],
  ['ml-1', 'w-6 bg-[#1fa5e3]'], ['ml-1', 'w-7 border-x-8 border-[#3d6f9c]'], ['ml-1', 'w-5 rounded-t-full bg-[#9c2f2f]'],
  ['ml-1', 'w-5 rounded-t-full bg-[#c9605c]'], ['ml-1', 'w-8 rounded-t bg-[#2aa9e0]'],
];
const TaskBar = () => (
  <footer className="flex h-[7px] shrink-0 items-end overflow-hidden border-t-2 border-[#51708c] bg-gradient-to-r from-[#86a0b9] via-[#a6c8e6] to-[#8aa5bf]">
    <span className="ml-4 h-1 w-6 rounded-t-full border-2 border-b-0 border-[#dcecf8] bg-[#3f78ab]" />
    <span className="ml-[52px] h-1 w-4 rounded-t-full bg-[#e3c33c]" />
    <button aria-label="Task" className="ml-[14px] h-[5px] w-[58px] border-x border-[#4e6a85] bg-[#c4dcf1]" />
    {apps.map(([m, b], k) => (
      <button key={k} aria-label={`Task ${k + 1}`} className={`${m} flex h-[5px] w-[58px] items-end justify-center border-x border-[#4e6a85] bg-[#c4dcf1]`}><span className={`h-1 ${b}`} /></button>
    ))}
    <span className="ml-auto h-[5px] w-[14px] border-l border-[#4e6a85] bg-[#a9c0d5]" />
  </footer>
);

export default function App() {
  return (
    <div className="flex h-screen flex-col overflow-hidden bg-[#f7f7f7] font-['Open_Sans','Noto_Sans',sans-serif] text-[12px] leading-4 text-black">
      <Header />
      <div className="flex min-h-0 flex-1">
        <aside className="flex w-[50px] shrink-0 flex-col">
          <div className="flex h-[340px] flex-col border-b border-r border-[#77777a] pl-px"><Grip /><Strip items={leftTools} wide /></div>
        </aside>
        <aside className="flex w-8 shrink-0 flex-col">
          <div className="-ml-px flex h-[350px] flex-col border-b border-l border-[#77777a]"><Grip /><Strip items={viewTools} wide={false} /></div>
        </aside>
        <div className="flex min-w-0 flex-1 flex-col">
          <div className="flex min-h-0 flex-1"><TreePanel /><Viewport /></div>
          <ModelTabs />
        </div>
        <aside className="flex w-12 shrink-0 flex-col pl-[3px]">
          <Grip /><Strip items={sketchTools} wide />
          <button aria-label="More tools" className="mb-2 ml-[19px] mt-auto"><svg width="9" height="9" viewBox="0 0 9 9" fill="none" stroke="#333" strokeWidth="1.300" aria-hidden="true"><path d="M1 1l3.500 3L8 1M1 5l3.500 3L8 5" /></svg></button>
          <div className="mb-[2px] border-t border-[#858585]" />
        </aside>
      </div>
      <div className="flex h-[19px] shrink-0 items-center border-t border-[#77777a] pl-[2px] pt-[2px]">
        <span>SOLIDWORKS Student Edition - Academic Use Only</span>
        <div className="ml-auto flex h-full items-center">
          <span className="pr-3">Length: 34.63mm</span>
          <span className="flex h-full items-center border-x border-[#d5d5d5] px-3">Editing Part</span>
          <span className="ml-[38px]">MMGS</span>
          <svg width="6" height="4" viewBox="0 0 6 4" className="ml-5" aria-hidden="true"><path d="M0 4h6L3 0z" fill="#333" /></svg>
          <span className="ml-[64px]"><Ico size={18}><path d="M1 9l5-7 12 3v7l-5 6L1 12z" fill="#ddd" /><path d="M1 9l12 4 5-8M13 13v5" /><circle cx="8" cy="7" r="2.500" fill="#fff" /></Ico></span>
        </div>
      </div>
      <TaskBar />
    </div>
  );
}
